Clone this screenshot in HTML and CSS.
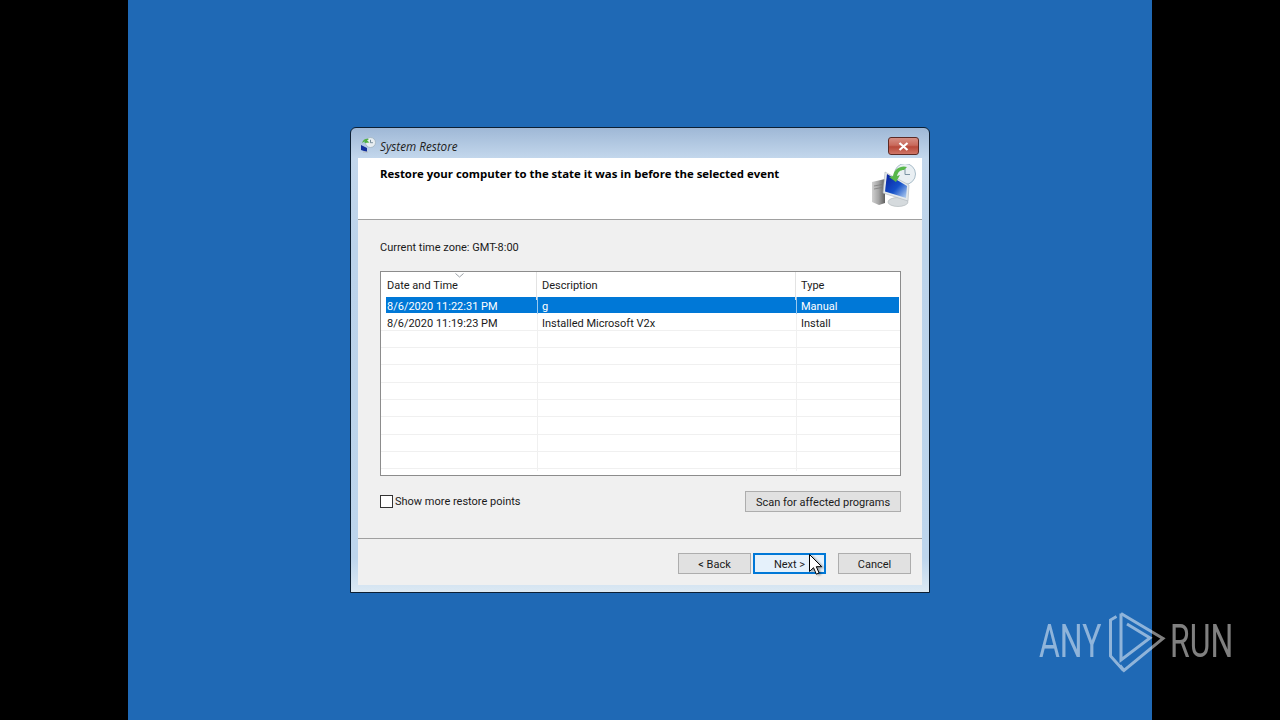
FILE: index.html
```html
<!DOCTYPE html>
<html lang="en">
<head>
    <meta charset="UTF-8">
    <meta name="viewport" content="width=device-width, initial-scale=1.0">
    <title>System Restore</title>
    <link rel="stylesheet" href="styles.css">
</head>
<body>
    <main class="desktop">
        <section class="window">
            <div class="titlebar">
                <svg class="title-icon" viewBox="0 0 16 16" width="16" height="16">
                    <circle cx="10.5" cy="5.5" r="5" fill="#e8eef2" stroke="#9fb2bf" stroke-width="0.8"/>
                    <path d="M10.5 2.8v2.9h2.4" fill="none" stroke="#5d7686" stroke-width="0.8"/>
                    <path d="M2 6c1-3.500 4-5 7-4l-2 1.500 2.500 2-5 .5 .5-1.500c-1 .3-2 .8-3 1.500z" fill="#4fb142"/>
                    <path d="M1 8l6 3v4l-6-2z" fill="#12309c"/>
                    <path d="M3 14.500h5v1h-5z" fill="#b4b8bc"/>
                </svg>
                <span class="title-text">System Restore</span>
                <button class="close-btn" type="button">
                    <svg viewBox="0 0 11 9" width="11" height="9">
                        <path d="M1.500 1l8 7M9.500 1l-8 7" stroke="#fff" stroke-width="2.200" fill="none"/>
                    </svg>
                </button>
            </div>

            <div class="client">
                <header class="page-head">
                    <h1>Restore your computer to the state it was in before the selected event</h1>
                    <svg class="head-icon" viewBox="0 0 45 44" width="45" height="44">
                        <defs>
                            <linearGradient id="screenGrad" x1="0" y1="0" x2="1" y2="1">
                                <stop offset="0" stop-color="#0a1f9c"/>
                                <stop offset="0.55" stop-color="#1450c8"/>
                                <stop offset="1" stop-color="#bcd6f2"/>
                            </linearGradient>
                            <linearGradient id="towerGrad" x1="0" y1="0" x2="1" y2="0">
                                <stop offset="0" stop-color="#d0d0d0"/>
                                <stop offset="0.5" stop-color="#a5a5a5"/>
                                <stop offset="1" stop-color="#5f5f5f"/>
                            </linearGradient>
                        </defs>
                        <path d="M1 18l13-3v24l-6 2-7-3z" fill="url(#towerGrad)"/>
                        <path d="M3 22l8-1.500M3 25l8-1.500" stroke="#777" stroke-width="0.7"/>
                        <ellipse cx="27" cy="38" rx="10" ry="4.500" fill="#d5dadd" stroke="#aab1b5" stroke-width="0.6"/>
                        <circle cx="34" cy="10" r="10.500" fill="#e9eff3" stroke="#a9bdc9" stroke-width="1"/>
                        <path d="M34 3v7.500h5" fill="none" stroke="#7b93a3" stroke-width="1"/>
                        <path d="M14 8l24 13-1 16-25-8z" fill="#e3e8eb" stroke="#aeb6bb" stroke-width="0.6"/>
                        <path d="M16 10l20 12-1 12-21-6.500z" fill="url(#screenGrad)"/>
                        <path d="M22 12c1-7 8-11 14-9l-3 3c-4 0-6 2-7 6l3-1-4 7-7-5z" fill="#58b84a"/>
                    </svg>
                </header>

                <div class="page-body">
                    <p class="zone">Current time zone: GMT-8:00</p>

                    <div class="list-box">
                        <svg class="sort-arrow" viewBox="0 0 9 5" width="9" height="5">
                            <path d="M0.500 0.500l4 3.500 4-3.500" fill="none" stroke="#9aa0a6" stroke-width="1"/>
                        </svg>
                        <div class="row list-head">
                            <div class="cell">Date and Time</div>
                            <div class="cell">Description</div>
                            <div class="cell">Type</div>
                        </div>
                        <div class="rows">
                            <div class="row item selected">
                                <div class="cell">8/6/2020 11:22:31 PM</div>
                                <div class="cell">g</div>
                                <div class="cell">Manual</div>
                            </div>
                            <div class="row item">
                                <div class="cell">8/6/2020 11:19:23 PM</div>
                                <div class="cell">Installed Microsoft V2x</div>
                                <div class="cell">Install</div>
                            </div>
                            <div class="row item"><div class="cell"></div><div class="cell"></div><div class="cell"></div></div>
                            <div class="row item"><div class="cell"></div><div class="cell"></div><div class="cell"></div></div>
                            <div class="row item"><div class="cell"></div><div class="cell"></div><div class="cell"></div></div>
                            <div class="row item"><div class="cell"></div><div class="cell"></div><div class="cell"></div></div>
                            <div class="row item"><div class="cell"></div><div class="cell"></div><div class="cell"></div></div>
                            <div class="row item"><div class="cell"></div><div class="cell"></div><div class="cell"></div></div>
                            <div class="row item"><div class="cell"></div><div class="cell"></div><div class="cell"></div></div>
                            <div class="row item"><div class="cell"></div><div class="cell"></div><div class="cell"></div></div>
                            <div class="row item last"><div class="cell"></div><div class="cell"></div><div class="cell"></div></div>
                        </div>
                    </div>

                    <div class="options">
                        <label class="check">
                            <span class="check-box"></span>
                            Show more restore points
                        </label>
                        <button class="btn btn-scan" type="button">Scan for affected programs</button>
                    </div>
                </div>

                <footer class="page-foot">
                    <button class="btn" type="button">&lt; Back</button>
                    <button class="btn btn-default" type="button">Next &gt;</button>
                    <button class="btn btn-cancel" type="button">Cancel</button>
                </footer>
            </div>

            <svg class="cursor" viewBox="0 0 14 22" width="14" height="22">
                <path d="M0.500 0.500v17l4-3.800 2.800 6.500 2.800-1.200-2.800-6.300h5.400z" fill="#fff" stroke="#000" stroke-width="1"/>
            </svg>
        </section>

        <div class="watermark">
            <span class="wm-text wm-any">ANY</span>
            <svg class="wm-logo" viewBox="0 0 65 70" width="65" height="70">
                <path d="M16 8.500l42 25-39 32-4-5" fill="none" stroke="#fff" stroke-width="3"/>
                <path d="M22 19l23 14-29 22v-46.500" fill="none" stroke="#fff" stroke-width="3"/>
                <path d="M11.500 11.500l-6 3.500v36l13 14.500" fill="none" stroke="#fff" stroke-width="3"/>
            </svg>
            <span class="wm-text wm-run">RUN</span>
        </div>
    </main>
</body>
</html>
```
FILE: styles.css
```css
/* Page */
html, body {
    margin: 0;
    height: 100%;
}

body {
    background-color: #000;
    font-family: "Roboto", "Open Sans", sans-serif;
    font-size: 11px;
    color: #1a1a1a;
    overflow: hidden;
}

.desktop {
    width: 1024px;
    height: 720px;
    margin: 0 auto;
    background-color: #1f69b5;
    display: flex;
    align-items: center;
    justify-content: center;
}

/* Window frame */
.window {
    position: relative;
    width: 580px;
    height: 466px;
    box-sizing: border-box;
    display: flex;
    flex-direction: column;
    padding: 0 7px 7px;
    border: 1px solid #0c1f33;
    border-radius: 6px 6px 0 0;
    background: linear-gradient(to bottom, #9fb8d6 0, #c3d7ec 30px, #bcd3ea 120px, #bdd5ec 430px, #dce9f3 464px);
}

.titlebar {
    height: 30px;
    flex: none;
    display: flex;
    align-items: center;
    gap: 4px;
    margin: 0 -7px;
    padding: 0 10px 0 9px;
}

.title-icon {
    flex: none;
    margin-top: 3px;
}

.title-text {
    font-family: "Open Sans", sans-serif;
    font-style: italic;
    font-size: 11.7px;
    color: #222;
    margin-top: 6px;
}

.close-btn {
    margin-left: auto;
    margin-top: 6px;
    width: 31px;
    height: 18px;
    padding: 0;
    border: 1px solid #5c2a24;
    border-radius: 3px;
    background: linear-gradient(to bottom, #d68f84 0, #c96a5c 45%, #b8493a 55%, #cf7566 100%);
    display: flex;
    align-items: center;
    justify-content: center;
}

/* Client area */
.client {
    flex: 1;
    display: flex;
    flex-direction: column;
    background-color: #f0f0f0;
}

.page-head {
    height: 62px;
    flex: none;
    position: relative;
    background-color: #fff;
    border-bottom: 1px solid #a0a0a0;
    padding: 8px 0 0 22px;
    box-sizing: border-box;
}

.page-head h1 {
    margin: 0;
    font-family: "Open Sans", sans-serif;
    font-size: 11.4px;
    font-weight: 700;
    color: #000;
}

.head-icon {
    position: absolute;
    top: 6px;
    right: 6px;
}

.page-body {
    flex: 1;
    padding: 0 20px 0 22px;
}

.zone {
    margin: 19px 0 15px;
    height: 17px;
    line-height: 17px;
}

/* Restore point list */
.list-box {
    position: relative;
    width: 519px;
    height: 203px;
    border: 1px solid #8c8c8c;
    background-color: #fff;
}

.sort-arrow {
    position: absolute;
    top: 1px;
    left: 74px;
}

.row {
    display: grid;
    grid-template-columns: 156px 259px 1fr;
}

.cell {
    padding-left: 6px;
    white-space: nowrap;
}

.list-head {
    height: 25px;
    line-height: 28px;
    grid-template-columns: 155px 259px 1fr;
}

.list-head .cell + .cell {
    border-left: 1px solid #e3e3e3;
    padding-left: 5px;
}

.item {
    height: 17.300px;
    line-height: 19px;
    box-sizing: border-box;
    border-bottom: 1px solid #f0f0f0;
}

.item .cell + .cell {
    border-left: 1px solid #f0f0f0;
    padding-left: 4px;
}

.item.last {
    height: 2px;
    border-bottom: none;
}

.item.selected {
    height: 16.600px;
    background-color: #0078d7;
    background-clip: padding-box;
    color: #fff;
    margin-left: 5px;
    margin-right: 1px;
    grid-template-columns: 151px 259px 1fr;
    border-bottom: 1px solid transparent;
}

.item.selected .cell:first-child {
    padding-left: 1px;
}

.item.selected .cell + .cell {
    border-left-color: #99c9ef;
}

/* Checkbox and scan button */
.options {
    display: flex;
    align-items: center;
    justify-content: space-between;
    width: 521px;
    margin-top: 15px;
}

.check {
    display: flex;
    align-items: center;
    gap: 2px;
}

.check-box {
    width: 11px;
    height: 11px;
    border: 1px solid #333;
    background-color: #fff;
}

.btn {
    width: 73px;
    height: 21px;
    padding: 1px 0 0;
    border: 1px solid #adadad;
    background-color: #e1e1e1;
    font-family: inherit;
    font-size: 11px;
    color: #1a1a1a;
}

.btn-scan {
    width: 156px;
}

.btn-default {
    border: 2px solid #0078d7;
    background-color: #e5f1fb;
}

.btn-cancel {
    margin-left: 10px;
}

/* Bottom buttons */
.page-foot {
    height: 47px;
    flex: none;
    display: flex;
    gap: 2px;
    justify-content: flex-end;
    padding: 14px 11px 0 0;
    box-sizing: border-box;
    border-top: 1px solid #a0a0a0;
}

.cursor {
    position: absolute;
    left: 458px;
    top: 426px;
    filter: drop-shadow(2px 1px 1px rgba(0, 0, 0, 0.35));
}

/* Watermark */
.watermark {
    position: absolute;
    left: 1039px;
    top: 605px;
    width: 195px;
    height: 70px;
    display: flex;
    align-items: center;
    opacity: 0.5;
    color: #fff;
}

.wm-text {
    font-family: "Roboto", sans-serif;
    font-weight: 400;
    font-size: 47px;
    line-height: 64px;
    margin-top: 2px;
    display: inline-block;
    transform-origin: left center;
    transform: scaleX(0.68);
}

.wm-any {
    width: 66px;
}

.wm-logo {
    flex: none;
}
```
